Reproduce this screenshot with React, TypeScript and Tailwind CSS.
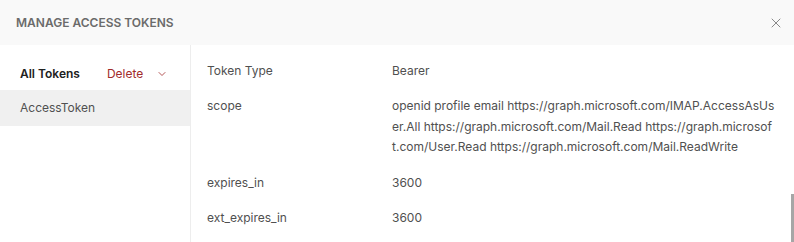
import { X, ChevronDown } from "lucide-react";

const rows = [
  { label: "Token Type", value: "Bearer" },
  {
    label: "scope",
    value:
      "openid profile email https://graph.microsoft.com/IMAP.AccessAsUser.All https://graph.microsoft.com/Mail.Read https://graph.microsoft.com/User.Read https://graph.microsoft.com/Mail.ReadWrite",
  },
  { label: "expires_in", value: "3600" },
  { label: "ext_expires_in", value: "3600" },
];

export default function App() {
  return (
    <div className="relative h-[242px] w-[794px] overflow-hidden bg-white font-['Inter',sans-serif] text-[12px] text-[#505050]">
      {/* Header */}
      <div className="flex h-[45px] items-center justify-between bg-[#f9f9f9] pl-4 pr-[10px]">
        <h1 className="text-[12px] font-semibold text-[#6b6b6b]">
          MANAGE ACCESS TOKENS
        </h1>
        <X className="h-[16px] w-[16px] text-[#6b6b6b]" strokeWidth={1.2} />
      </div>

      {/* Body */}
      <div className="flex h-[197px]">
        <div className="w-[191px] shrink-0 border-r border-[#ededed] pt-[13px]">
          <div className="flex h-[32px] items-center whitespace-nowrap px-5">
            <span className="font-semibold text-[#212121]">All Tokens</span>
            <button className="ml-[27px] flex items-center text-[#a12b2b]">
              Delete
              <ChevronDown className="ml-[13px] h-[12px] w-[12px]" strokeWidth={1.6} />
            </button>
          </div>
          <div className="flex h-[36px] items-center bg-[#f0f0f0] px-5">AccessToken</div>
        </div>

        <div className="flex-1 pl-[16px] pt-[8px]">
          {rows.map((row) => (
            <div key={row.label} className="flex py-[7.5px] leading-[20.5px]">
              <div className="w-[185px] shrink-0">{row.label}</div>
              <div className="w-[384px] break-all">{row.value}</div>
            </div>
          ))}
        </div>
      </div>

      {/* Scrollbar */}
      <div className="absolute bottom-0 right-0 h-[48px] w-[3px] bg-[#a6a6a6]" />
    </div>
  );
}
